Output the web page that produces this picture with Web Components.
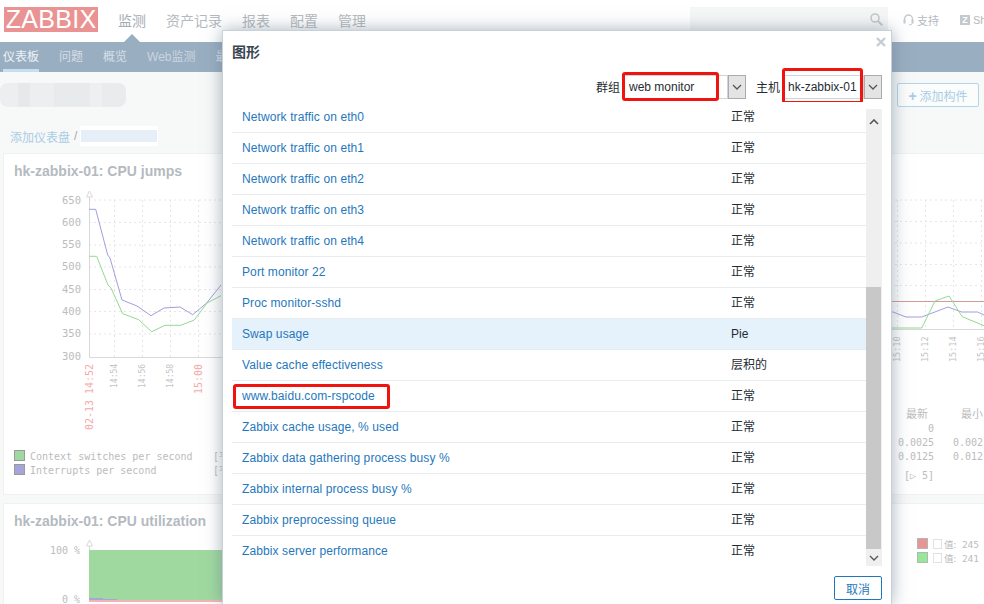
<!DOCTYPE html>
<html lang="zh">
<head>
<meta charset="utf-8">
<title>Zabbix</title>
<style>
   html, body {
      margin: 0;
      height: 604px;
      overflow: hidden;
      background: #f7f8f8;
      font-family: "Liberation Sans", "Noto Sans CJK SC", sans-serif;
   }
</style>
</head>
<body>

<zbx-topnav></zbx-topnav>
<zbx-subnav></zbx-subnav>
<zbx-head></zbx-head>

<zbx-board>
   <zbx-widget heading="hk-zabbix-01: CPU jumps">
      <svg width="488" height="306" viewBox="4 188 488 306" font-family="DejaVu Sans Mono, monospace">
         <g stroke="#e6e6e6" stroke-dasharray="2 3" fill="none">
            <path d="M89 200H492M89 222.5H492M89 245H492M89 267H492M89 289.5H492M89 311.5H492M89 334H492"/>
            <path d="M114.5 200V357M142.5 200V357M170.5 200V357M198.5 200V357"/>
         </g>
         <path d="M89.5 193V357.5H492" fill="none" stroke="#d9d9d9"/>
         <path d="M89.5 191l-3 6h6z" fill="#fff" stroke="#d9d9d9"/>
         <g fill="#bcbcbc" font-size="10.5" text-anchor="end">
            <text x="81" y="204">650</text><text x="81" y="226">600</text>
            <text x="81" y="248">550</text><text x="81" y="270">500</text>
            <text x="81" y="293">450</text><text x="81" y="315">400</text>
            <text x="81" y="337">350</text><text x="81" y="360">300</text>
         </g>
         <path d="M89 209.3H95.7L107.7 255L110 258L122 300L137 306L151 315.7L164 308L180 307L192.7 314.7L206.7 303L221 285" fill="none" stroke="#9f9fdc"/>
         <path d="M89 256.3H96.7L108 285L111 288L122.7 313.7L138.7 319.7L151.7 331.7L165 325.3H180.7L194.3 320L207 303L221 295.7" fill="none" stroke="#93d993"/>
         <g font-size="10" fill="#f4a9a9">
            <text transform="translate(93 430) rotate(-90)">02-13</text>
            <text transform="translate(93 394) rotate(-90)">14:52</text>
            <text transform="translate(201.5 394) rotate(-90)">15:00</text>
         </g>
         <g font-size="8" fill="#c4c4c4">
            <text transform="translate(117 388) rotate(-90)">14:54</text>
            <text transform="translate(145 388) rotate(-90)">14:56</text>
            <text transform="translate(173 388) rotate(-90)">14:58</text>
         </g>
         <rect x="14.5" y="450.5" width="10" height="10" fill="#a0d9a0" stroke="#9a9a9a"/>
         <rect x="14.5" y="464.5" width="10" height="10" fill="#a5a5dc" stroke="#9a9a9a"/>
         <g font-size="10" fill="#bcbcbc">
            <text x="30" y="460">Context switches per second</text>
            <text x="30" y="474">Interrupts per second</text>
            <text x="213" y="460">[平</text>
            <text x="213" y="474">[平</text>
         </g>
      </svg>
   </zbx-widget>

   <zbx-widget heading="">
      <svg width="484" height="306" viewBox="500 188 484 306" font-family="DejaVu Sans Mono, monospace">
         <g stroke="#e6e6e6" stroke-dasharray="2 3" fill="none">
            <path d="M500 200H984M500 221.5H984M500 243H984M500 264.5H984M500 285.5H984"/>
            <path d="M897.5 200V329M925.5 200V329M953.5 200V329M981.5 200V329"/>
         </g>
         <path d="M500 329.5H984" stroke="#d9d9d9"/>
         <path d="M880 301.5H984" stroke="#d49a9a"/>
         <path d="M880 309L893 312L906 317H921.7L948 307L961.7 312H977.7L984 315" fill="none" stroke="#9f9fdc"/>
         <path d="M880 328H921.7L935 301L949 296L962.3 316.7L984 325.7" fill="none" stroke="#93d993"/>
         <g font-size="8.5" fill="#c4c4c4">
            <text transform="translate(900 362) rotate(-90)">15:10</text>
            <text transform="translate(928 362) rotate(-90)">15:12</text>
            <text transform="translate(956 362) rotate(-90)">15:14</text>
            <text transform="translate(984 362) rotate(-90)">15:16</text>
         </g>
         <g font-size="10" fill="#bcbcbc" text-anchor="end">
            <text x="928" y="418" font-size="11" font-family="Noto Sans CJK SC">最新</text>
            <text x="983" y="418" font-size="11" font-family="Noto Sans CJK SC">最小</text>
            <text x="934" y="432">0</text>
            <text x="934" y="446">0.0025</text>
            <text x="934" y="460">0.0125</text>
            <text x="934" y="479">[▷ 5]</text>
            <text x="983" y="446">0.002</text>
            <text x="983" y="460">0.012</text>
         </g>
      </svg>
   </zbx-widget>

   <zbx-widget heading="hk-zabbix-01: CPU utilization">
      <svg width="488" height="66" viewBox="4 538 488 66" font-family="DejaVu Sans Mono, monospace">
         <path d="M89.5 542V600" stroke="#d9d9d9"/>
         <path d="M89.5 540l-3 6h6z" fill="#fff" stroke="#d9d9d9"/>
         <rect x="89" y="550" width="140" height="51" fill="#a0d9a0"/>
         <rect x="89" y="598" width="14" height="2" fill="#a5a5dc"/>
         <rect x="103" y="599" width="14" height="1" fill="#a5a5dc"/>
         <rect x="89" y="600" width="140" height="2" fill="#f4b4b4"/>
         <g fill="#bcbcbc" font-size="10" text-anchor="end">
            <text x="80" y="554">100 %</text>
            <text x="80" y="603">0 %</text>
         </g>
      </svg>
   </zbx-widget>

   <zbx-widget heading="">
      <svg width="484" height="66" viewBox="500 538 484 66" font-family="DejaVu Sans Mono, monospace">
         <rect x="917.5" y="538.5" width="10" height="10" fill="#e89595" stroke="#b5b5b5"/>
         <rect x="917.5" y="552.5" width="10" height="10" fill="#95e895" stroke="#b5b5b5"/>
         <rect x="933.5" y="539.5" width="8" height="9" fill="none" stroke="#e2e2e2"/>
         <rect x="933.5" y="553.5" width="8" height="9" fill="none" stroke="#e2e2e2"/>
         <g font-size="9.5" fill="#bcbcbc">
            <text x="944" y="548"><tspan font-family="Noto Sans CJK SC">值:</tspan> 245</text>
            <text x="944" y="562"><tspan font-family="Noto Sans CJK SC">值:</tspan> 241</text>
         </g>
      </svg>
   </zbx-widget>
</zbx-board>

<zbx-dialog heading="图形">
   <zbx-row name="Network traffic on eth0" kind="正常"></zbx-row>
   <zbx-row name="Network traffic on eth1" kind="正常"></zbx-row>
   <zbx-row name="Network traffic on eth2" kind="正常"></zbx-row>
   <zbx-row name="Network traffic on eth3" kind="正常"></zbx-row>
   <zbx-row name="Network traffic on eth4" kind="正常"></zbx-row>
   <zbx-row name="Port monitor 22" kind="正常"></zbx-row>
   <zbx-row name="Proc monitor-sshd" kind="正常"></zbx-row>
   <zbx-row name="Swap usage" kind="Pie" hover></zbx-row>
   <zbx-row name="Value cache effectiveness" kind="层积的"></zbx-row>
   <zbx-row name="www.baidu.com-rspcode" kind="正常" marked></zbx-row>
   <zbx-row name="Zabbix cache usage, % used" kind="正常"></zbx-row>
   <zbx-row name="Zabbix data gathering process busy %" kind="正常"></zbx-row>
   <zbx-row name="Zabbix internal process busy %" kind="正常"></zbx-row>
   <zbx-row name="Zabbix preprocessing queue" kind="正常"></zbx-row>
   <zbx-row name="Zabbix server performance" kind="正常" last></zbx-row>
</zbx-dialog>

<script>
const FONT = `"Liberation Sans", "Noto Sans CJK SC", sans-serif`;

const CHEVRON_DOWN = `<svg width="10" height="6" viewBox="0 0 10 6"><path d="M1 1l4 4 4-4" fill="none" stroke="#555" stroke-width="1.3"/></svg>`;

// Small helper, every element is only a shadow root with fixed markup
class ZbxElement extends HTMLElement {
   connectedCallback() {
      if (this.shadowRoot) return;
      this.attachShadow({ mode: "open" }).innerHTML = this.markup();
   }
}

// Top bar
class ZbxTopnav extends ZbxElement {
   markup() {
      return `
      <style>
         :host { display: flex; align-items: center; height: 42px; box-sizing: border-box; background: #fff; font: 14px ${FONT}; color: #b4b9be; padding-bottom: 3px; overflow: hidden; }
         .logo { margin-left: 4px; width: 94px; height: 25px; background: #ea9393; color: #fff; font-size: 25px; line-height: 25px; text-align: center; letter-spacing: .3px; flex: none; }
         nav { display: flex; gap: 20px; margin-left: 20px; flex: 1; height: 100%; align-items: center; }
         nav span { position: relative; }
         .cur { color: #a4acb3; }
         .cur::after { content: ""; position: absolute; left: 6px; top: 24px; border: 8px solid transparent; border-top: 0; border-bottom-color: #9aaec2; }
         .search { width: 198px; height: 25px; background: #f5f6f6; display: flex; align-items: center; justify-content: flex-end; padding-right: 5px; box-sizing: border-box; margin-right: 15px; flex: none; }
         .tool { display: flex; align-items: center; gap: 3px; font-size: 11px; white-space: nowrap; flex: none; overflow: hidden; }
         .z { width: 10px; height: 10px; background: #c4c9ce; color: #fff; font: bold 9px/10px ${FONT}; text-align: center; flex: none; }
      </style>
      <div class="logo">ZABBIX</div>
      <nav>
         <span class="cur">监测</span><span>资产记录</span><span>报表</span><span>配置</span><span>管理</span>
      </nav>
      <div class="search">
         <svg width="13" height="13" viewBox="0 0 13 13"><circle cx="5" cy="5" r="4" fill="none" stroke="#c4c9ce" stroke-width="1.6"/><path d="M8 8l4.3 4.3" stroke="#c4c9ce" stroke-width="2.2"/></svg>
      </div>
      <div class="tool" style="width:57px">
         <svg width="11" height="12" viewBox="0 0 11 12"><path d="M1.5 7V5a4 4 0 0 1 8 0v2" fill="none" stroke="#c4c9ce" stroke-width="1.3"/><rect x=".5" y="5.5" width="2" height="4" fill="#c4c9ce"/><rect x="8.5" y="5.5" width="2" height="4" fill="#c4c9ce"/><path d="M9 9.5q0 1.5-3 1.5" fill="none" stroke="#c4c9ce"/></svg>
         <span>支持</span>
      </div>
      <div class="tool" style="width:24px"><span class="z">Z</span><span>Sh</span></div>`;
   }
}

// Second bar with the section links
class ZbxSubnav extends ZbxElement {
   markup() {
      return `
      <style>
         :host { display: flex; height: 30px; background: #9aaec2; font: 12px/30px ${FONT}; color: #d5dee6; padding-left: 3px; gap: 20px; overflow: hidden; white-space: nowrap; }
         .cur { color: #eef3f7; box-shadow: inset 0 -3px #c4def2; }
      </style>
      <span class="cur">仪表板</span><span>问题</span><span>概览</span><span style="color:#c9d5e0">Web监测</span><span>最</span>`;
   }
}

// Dashboard title, add button and breadcrumb
class ZbxHead extends ZbxElement {
   markup() {
      return `
      <style>
         :host { display: block; height: 82px; box-sizing: border-box; padding-top: 11px; font: 12px ${FONT}; }
         .top { display: flex; justify-content: space-between; height: 24px; padding-right: 5px; }
         .blur { width: 126px; height: 24px; border-radius: 8px; background:
            linear-gradient(90deg, #eceeef 0 18px, #e6e9ea 18px 30px, #eceeef 30px 54px, #e8ebec 54px 90px, #edeff0 90px 102px, #e9ecec 102px); }
         button { width: 82px; height: 24px; box-sizing: border-box; border: 1px solid #b3d5ea; border-radius: 2px; background: #fbfcfc; color: #a9cde4; font: 12px ${FONT}; padding: 0; }
         button b { font-size: 14px; margin-right: 3px; font-weight: bold; }
         .crumb { display: flex; align-items: center; margin: 18px 0 0 10px; color: #a9cde4; height: 22px; }
         .crumb i { font-style: normal; color: #aaa; margin: 0 3px 0 4px; }
         .patch { width: 76px; height: 12px; background: #e6eff7; border: 4px solid #fff; border-width: 4px 1px; }
      </style>
      <div class="top"><div class="blur"></div><button><b>+</b>添加构件</button></div>
      <div class="crumb"><span>添加仪表盘</span><i>/</i><span class="patch"></span></div>`;
   }
}

// Grid of widgets, the dialog lies over it
class ZbxBoard extends ZbxElement {
   markup() {
      return `
      <style>
         :host { display: grid; grid-template-columns: 488px 484px; grid-template-rows: 340px 200px; gap: 10px 8px; padding-left: 4px; }
      </style>
      <slot></slot>`;
   }
}

class ZbxWidget extends ZbxElement {
   markup() {
      return `
      <style>
         :host { display: block; background: #fff; box-shadow: 0 0 0 1px #f0f1f1; overflow: hidden; }
         h4 { margin: 0; height: 34px; padding-left: 10px; font: bold 14px/34px ${FONT}; color: #b5babf; }
         ::slotted(svg) { display: block; }
      </style>
      <h4>${this.getAttribute("heading")}</h4>
      <slot></slot>`;
   }
}

// Input and drop down arrow of the dialog filter
class ZbxCombo extends ZbxElement {
   markup() {
      return `
      <style>
         :host { display: flex; height: 24px; font: 12px ${FONT}; color: #1f2c33; }
         .input { width: ${this.getAttribute("width")}px; box-sizing: border-box; padding-left: ${this.getAttribute("pad")}px; line-height: 22px; border: 1px solid #ccd5db; border-left: 0; white-space: nowrap; }
         .arrow { width: 18px; box-sizing: border-box; border: 1px solid #acacac; background: #e4e4e4; display: flex; align-items: center; justify-content: center; }
      </style>
      <div class="input">${this.getAttribute("value")}</div>
      <div class="arrow">${CHEVRON_DOWN}</div>`;
   }
}

class ZbxRow extends ZbxElement {
   markup() {
      const bg = this.hasAttribute("hover") ? "#e5f1fb" : "#fff";
      const line = this.hasAttribute("last") ? "#fff" : "#e8ecef";
      const mark = this.hasAttribute("marked") ? `<span class="mark"></span>` : "";
      return `
      <style>
         :host { display: grid; grid-template-columns: 489px 1fr; height: 31px; box-sizing: border-box; padding-left: 10px; background: ${bg}; border-bottom: 1px solid ${line}; font: 12px/30px ${FONT}; position: relative; }
         a { color: #1f78bd; letter-spacing: .1px; }
         span { color: #1f2c33; }
         .mark { position: absolute; left: 1px; top: 3px; width: 157px; height: 25px; box-sizing: border-box; border: 3px solid #f0140f; border-radius: 3px; }
      </style>
      <a>${this.getAttribute("name")}</a><span>${this.getAttribute("kind")}</span>${mark}`;
   }
}

// Popup with the list of graphs
class ZbxDialog extends ZbxElement {
   markup() {
      return `
      <style>
         :host { position: absolute; left: 222px; top: 30px; width: 670px; height: 574px; box-sizing: border-box; background: #fff; border: 1px solid #c9d0d6; border-bottom: 0; box-shadow: 0 0 16px rgba(95, 115, 135, .55); padding: 0 9px; font: 12px ${FONT}; color: #1f2c33; display: block; }
         h3 { margin: 0; height: 44px; font: bold 14px/42px ${FONT}; color: #3b4550; }
         .close { position: absolute; right: 5px; top: 6px; width: 10px; height: 10px; }
         .filter { display: flex; justify-content: flex-end; align-items: center; height: 24px; position: relative; }
         .filter label { margin: -2px 2px 0 0; }
         .filter label + zbx-combo + label { margin-left: 10px; }
         .mark { position: absolute; box-sizing: border-box; border: 3px solid #f0140f; border-radius: 3px; }
         .main { display: flex; margin-top: 3px; height: 464px; }
         .rows { flex: 1; overflow: hidden; }
         .bar { width: 16px; margin-top: 7px; background: #efefef; display: flex; flex-direction: column; align-items: center; }
         .bar .end { height: 178px; padding-top: 5px; box-sizing: border-box; }
         .bar .thumb { width: 15px; align-self: flex-start; height: 262px; background: #c8c8c8; flex: none; }
         .bar .down { flex: 1; display: flex; align-items: center; justify-content: center; }
         .foot { display: flex; justify-content: flex-end; margin-top: 10px; }
         button { width: 48px; height: 24px; box-sizing: border-box; background: #fff; border: 1px solid #1f78bd; border-radius: 2px; color: #1f78bd; font: 12px ${FONT}; padding: 0; }
      </style>
      <h3>${this.getAttribute("heading")}</h3>
      <svg class="close" viewBox="0 0 10 10"><path d="M1 1l8 8M9 1l-8 8" stroke="#c5ccd3" stroke-width="2.4"/></svg>
      <div class="filter">
         <label>群组</label><zbx-combo width="106" pad="7" value="web monitor"></zbx-combo>
         <label>主机</label><zbx-combo width="82" pad="6" value="hk-zabbix-01"></zbx-combo>
         <span class="mark" style="left:390px;top:-3px;width:97px;height:29px"></span>
         <span class="mark" style="left:550px;top:-7px;width:81px;height:36px"></span>
      </div>
      <div class="main">
         <div class="rows"><slot></slot></div>
         <div class="bar">
            <div class="end"><svg width="10" height="6" viewBox="0 0 10 6"><path d="M1 5l4-4 4 4" fill="none" stroke="#555" stroke-width="1.6"/></svg></div>
            <div class="thumb"></div>
            <div class="down">${CHEVRON_DOWN}</div>
         </div>
      </div>
      <div class="foot"><button>取消</button></div>`;
   }
}

customElements.define("zbx-combo", ZbxCombo);
customElements.define("zbx-topnav", ZbxTopnav);
customElements.define("zbx-subnav", ZbxSubnav);
customElements.define("zbx-head", ZbxHead);
customElements.define("zbx-board", ZbxBoard);
customElements.define("zbx-widget", ZbxWidget);
customElements.define("zbx-row", ZbxRow);
customElements.define("zbx-dialog", ZbxDialog);
</script>
</body>
</html>
